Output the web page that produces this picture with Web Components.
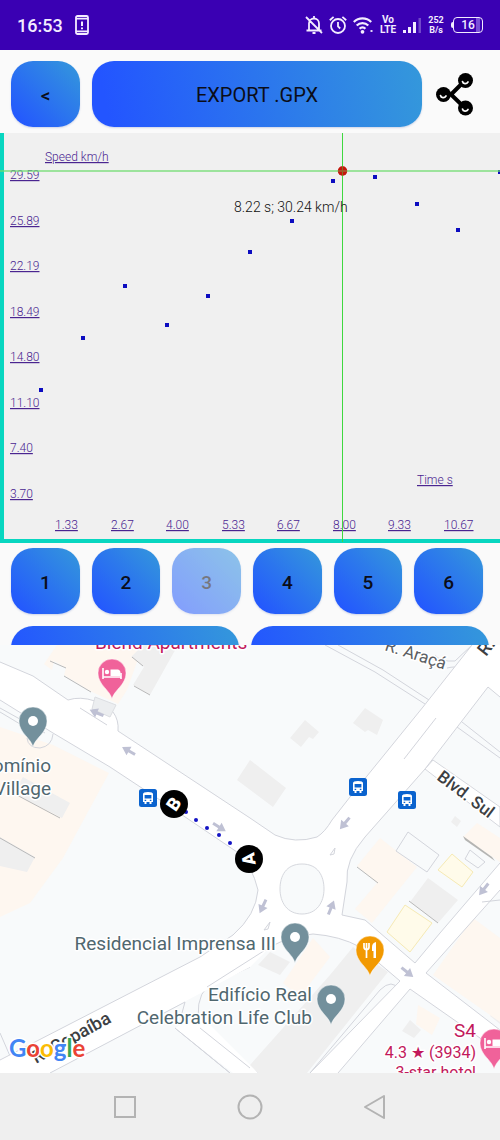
<!DOCTYPE html>
<html lang="en">
<head>
<meta charset="utf-8">
<meta name="viewport" content="width=device-width, initial-scale=1">
<title>Speed tracker</title>
<style>
  body {
    margin: 0;
    background: #fafafa;
    font-family: Roboto, "Liberation Sans", sans-serif;
  }
</style>
</head>
<body>
<tracker-app></tracker-app>

<script>
class StatusBar extends HTMLElement {
  constructor() {
    super();
    this.attachShadow({ mode: 'open' });
    this.shadowRoot.innerHTML = `
      <style>
        :host {
          display: flex;
          align-items: center;
          justify-content: space-between;
          height: 50px;
          padding: 0 17px;
          background: #3a00b3;
          color: #f3ecff;
        }
        .side {
          display: flex;
          align-items: center;
          gap: 6px;
        }
        .clock {
          font-size: 18px;
          font-weight: 500;
          margin-right: 6px;
        }
        svg {
          display: block;
          fill: none;
          stroke: currentColor;
          stroke-width: 1.8;
        }
        .stack {
          width: 18px;
          font-size: 9px;
          line-height: 10px;
          font-weight: 700;
          text-align: center;
          white-space: nowrap;
        }
        .stack.network {
          font-size: 10px;
        }
        .battery {
          box-sizing: border-box;
          width: 32px;
          display: flex;
          align-items: center;
        }
        .battery i {
          width: 2px;
          height: 6px;
          background: currentColor;
          border-radius: 2px 0 0 2px;
        }
        .battery span {
          flex: 1;
          border: 1px solid currentColor;
          border-radius: 4px;
          font-size: 12px;
          line-height: 14px;
          font-weight: 500;
          text-align: center;
          background: linear-gradient(90deg, transparent 78%, #7a4fd6 78%, #7a4fd6 92%, transparent 92%);
        }
      </style>
      <div class="side">
        <span class="clock">16:53</span>
        <svg width="14" height="20" viewBox="0 0 14 20">
          <rect x="1" y="1" width="12" height="18" rx="1.5" />
          <path d="M1 3.6h12M1 16.4h12" />
          <path d="M7 6.5v4.6M7 12.4v1.8" stroke-width="2" />
        </svg>
      </div>
      <div class="side">
        <svg width="18" height="20" viewBox="0 0 18 20">
          <path d="M4 15.500V8.500a5 5 0 0 1 10 0v7M1.500 15.500h15M9 1v2.500M7.500 18h3M1 2 17 18" />
        </svg>
        <svg width="18" height="20" viewBox="0 0 18 20">
          <circle cx="9" cy="11" r="7" />
          <path d="M9 7v4.300l2.200 2.200M.8 5.200 4.600 1.900M17.200 5.200 13.400 1.900" />
        </svg>
        <svg width="20" height="20" viewBox="0 0 20 20">
          <path d="M.8 7a12.300 12.300 0 0 1 17.400 0M3.700 10.500a8.200 8.200 0 0 1 11.600 0M6.600 13.700a4 4 0 0 1 5.800 0" stroke-width="2.200" />
          <circle cx="9.500" cy="16.800" r="1" fill="currentColor" />
          <path d="M17.500 16h2" />
        </svg>
        <div class="stack network">Vo<br>LTE</div>
        <svg width="18" height="20" viewBox="0 0 18 20">
          <g fill="currentColor" stroke="none">
            <rect y="15" width="3" height="3" /><rect x="5" y="12" width="3" height="6" />
            <rect x="10" y="7" width="3" height="11" /><rect x="15.500" y="3" width="2.500" height="15" opacity=".3" />
          </g>
        </svg>
        <div class="stack">252<br>B/s</div>
        <div class="battery"><i></i><span>16</span></div>
      </div>
    `;
  }
}

class GradientButton extends HTMLElement {
  constructor() {
    super();
    this.attachShadow({ mode: 'open' });
  }

  connectedCallback() {
    this.shadowRoot.innerHTML = `
      <style>
        :host {
          display: block;
        }
        button {
          display: block;
          width: 100%;
          height: 66px;
          padding: 2px 0 0;
          border: 0;
          border-radius: 22px;
          background: linear-gradient(var(--gradient-angle, 45deg), #2355ff 5%, #3498db);
          box-shadow: 0 1px 2px rgba(30, 60, 160, 0.2);
          color: #0b0d18;
          font: 500 19px Roboto, "Liberation Sans", sans-serif;
        }
        :host([wide]) button {
          font-weight: 400;
          font-size: 20px;
        }
        button:disabled {
          opacity: 0.55;
        }
      </style>
      <button type="button" ${this.hasAttribute('disabled') ? 'disabled' : ''}><slot></slot></button>
    `;
  }
}

class ToolRow extends HTMLElement {
  constructor() {
    super();
    this.attachShadow({ mode: 'open' });
    this.shadowRoot.innerHTML = `
      <style>
        :host {
          display: flex;
          align-items: center;
          gap: 12px;
          padding: 11px 24px 6px 11px;
        }
        .back {
          width: 69px;
        }
        .export {
          flex: 1;
          --gradient-angle: 80deg;
        }
        .share {
          padding: 0;
          border: 0;
          background: none;
        }
        svg {
          display: block;
        }
      </style>
      <gradient-button class="back">&lt;</gradient-button>
      <gradient-button class="export" wide>EXPORT .GPX</gradient-button>
      <button class="share" type="button" aria-label="Share">
        <svg width="42" height="44" viewBox="0 0 42 44">
          <path d="M31 8.500 17 22.500 31 36M9 22.500h9" fill="none" stroke="#000" stroke-width="4" />
          <circle cx="31.500" cy="8.500" r="7.500" /><circle cx="9.500" cy="22.500" r="7.500" /><circle cx="31.500" cy="36" r="7.500" />
          <g fill="none" stroke="#fafafa" stroke-width="1.700" stroke-linecap="round">
            <path d="M28.500 9.500c.5 2.500 4 3 5.500 .5M6.500 23.500c.5 2.500 4 3 5.500 .5M28.500 37c.5 2.500 4 3 5.500 .5" />
          </g>
        </svg>
      </button>
    `;
  }
}

class SpeedChart extends HTMLElement {
  constructor() {
    super();
    this.attachShadow({ mode: 'open' });
    this.render();
  }

  renderPoints() {
    const points = [
      [41, 257], [83, 205], [125, 153], [167, 192], [208, 163], [250, 119],
      [292, 88], [333, 48], [375, 44], [417, 71], [458, 97], [500, 39],
    ];
    return points
      .map(([x, y]) => `<rect x="${x - 2}" y="${y - 2}" width="4" height="4" />`)
      .join('');
  }

  renderLabels() {
    const speeds = ['29.59', '25.89', '22.19', '18.49', '14.80', '11.10', '7.40', '3.70'];
    const times = ['1.33', '2.67', '4.00', '5.33', '6.67', '8.00', '9.33', '10.67'];
    return [
      ...speeds.map((s, i) => `<text x="10" y="${Math.round(46 + i * 45.5)}">${s}</text>`),
      ...times.map((t, i) => `<text x="${Math.round(55 + i * 55.5)}" y="396">${t}</text>`),
    ].join('');
  }

  render() {
    this.shadowRoot.innerHTML = `
      <style>
        :host {
          display: block;
        }
        svg {
          display: block;
          width: 100%;
          height: auto;
          background: #f0f0f0;
        }
        .axis {
          fill: #08d6c0;
        }
        .labels {
          fill: #4a2590;
          font-size: 12px;
          font-weight: 300;
          text-decoration: underline;
        }
        .points {
          fill: #0c0cc0;
        }
        .reading {
          fill: #111;
          font-size: 14px;
          font-weight: 300;
        }
      </style>
      <svg viewBox="0 0 500 410" role="img" aria-label="Speed over time">
        <g class="labels">
          <text x="45" y="28">Speed km/h</text>
          <text x="417" y="351">Time s</text>
          ${this.renderLabels()}
        </g>
        <g class="points">${this.renderPoints()}</g>
        <rect class="axis" width="4" height="409" />
        <rect class="axis" y="406" width="500" height="4" />
        <circle cx="342.500" cy="38" r="4.700" fill="#c4180c" />
        <rect y="37" width="500" height="2" fill="#6fdc6f" opacity=".65" />
        <rect x="342" width="1" height="409" fill="#3fd83f" />
        <circle cx="342.500" cy="38" r="4.700" fill="#c4180c" opacity=".55" />
        <text class="reading" x="234" y="79">8.22 s; 30.24 km/h</text>
      </svg>
    `;
  }
}

class LapRow extends HTMLElement {
  constructor() {
    super();
    this.attachShadow({ mode: 'open' });
    this.shadowRoot.innerHTML = `
      <style>
        :host {
          display: block;
        }
        .laps {
          display: grid;
          grid-template-columns: repeat(6, 1fr);
          gap: 12px;
          padding: 5px 17px 12px 11px;
        }
        /* the next row only peeks out above the map */
        .more {
          display: flex;
          gap: 12px;
          height: 19px;
          padding: 0 11px;
          overflow: hidden;
          --gradient-angle: 70deg;
        }
        .more > * {
          flex: 24;
        }
        .more > :last-child {
          flex: 25;
        }
      </style>
      <div class="laps">
        ${[1, 2, 3, 4, 5, 6]
          .map((n) => `<gradient-button ${n === 3 ? 'disabled' : ''}>${n}</gradient-button>`)
          .join('')}
      </div>
      <div class="more">
        <gradient-button></gradient-button>
        <gradient-button></gradient-button>
      </div>
    `;
  }
}

class RouteMap extends HTMLElement {
  constructor() {
    super();
    this.attachShadow({ mode: 'open' });
    this.render();
  }

  renderPin(x, y, color, glyph) {
    return `
      <g transform="translate(${x} ${y})">
        <path d="M0 26C-2 17-14 12-14 0a14 14 0 0 1 28 0C14 12 2 17 0 26z" fill="${color}" stroke="#fff" stroke-opacity=".6" stroke-width=".8" />
        ${glyph}
      </g>
    `;
  }

  renderBus(x, y) {
    return `
      <g transform="translate(${x} ${y})">
        <rect x="-9" y="-9" width="18" height="18" rx="2.500" fill="#0b63ce" />
        <path d="M-5-4q0-2 5-2t5 2v8h-1.500v2h-2v-2h-3v2h-2v-2H-5z" fill="#fff" />
        <path d="M-3.400-3h6.800v3.400h-6.800zM-3.400 1.800h1.600v1.300h-1.600zM1.800 1.800h1.600v1.300H1.800z" fill="#0b63ce" />
      </g>
    `;
  }

  renderArrow(x, y, angle) {
    return `<path transform="translate(${x} ${y}) rotate(${angle})" d="M8 0 0-5v3.500h-7v3h7V5z" />`;
  }

  render() {
    const dot = '<circle r="5" fill="#fff" />';
    const bed = `
      <path d="M-9-5v11M9 0v6M-9 4H9" fill="none" stroke="#fff" stroke-width="1.600" />
      <circle cx="-5" cy="-1" r="2.200" fill="#fff" />
      <path d="M-1.500-3.500H6Q8.500-3 8.500 0v3h-10z" fill="#fff" />
    `;
    const cutlery = `
      <path d="M-6-7v4q0 2.500 2.500 2.500T-1-3v-4M-3.500-7V8" fill="none" stroke="#fff" stroke-width="1.700" />
      <path d="M2-3q0-4 4-5V8H3.500V1H2z" fill="#fff" />
    `;

    this.shadowRoot.innerHTML = `
      <style>
        :host {
          display: block;
        }
        svg {
          display: block;
          width: 100%;
          height: auto;
          background: #f8fafb;
        }
        text {
          paint-order: stroke;
          stroke: #fff;
          stroke-width: 3px;
          stroke-linejoin: round;
        }
        .road { fill: #fff; stroke: #d6d8de; }
        .line { fill: none; stroke: #d3d5dc; }
        .grey { fill: #efefef; }
        .cream { fill: #fef7f0; }
        .yellow { fill: #fffbea; stroke: #f6eab4; }
        .shade { fill: none; stroke: #b9b9b9; }
        .arrows { fill: #bfc1d4; }
        .place { fill: #50676f; font-size: 19px; text-anchor: end; }
        .hotel { fill: #c2185b; font-size: 19px; }
        .hotel.small { font-size: 16px; }
        .right { text-anchor: end; }
        .street { fill: #5b5e63; font-size: 17px; }
        .street.dark { fill: #3c4043; font-weight: 500; }
        .street.large { font-size: 18px; }
        .marker { fill: #fff; stroke: none; font-size: 18px; font-weight: 900; text-anchor: middle; }
        .logo { font-family: Lato, sans-serif; font-size: 24px; font-weight: 700; }
      </style>
      <svg viewBox="0 645 500 428" role="img" aria-label="Map of the route">
        <!-- plots and buildings -->
        <path class="cream" d="M0 727 53 745 109 773 63 858 30 903 0 917zM57 645 44 664 52 670 54 661 66 668 64 675 92 692 118 704 127 690 143 645z" />
        <path class="grey" d="M143 645 131 657 144 667 133 685 150 695 178 645zM23 777 70 803 62 818 13 793zM0 837 35 857 27 872 0 866z
          M237 780 250 760 286 788 273 807zM305 720 319 732 313 739 309 737 301 747 290 738zM365 708 383 720 377 735 368 730 365 732 353 723z
          M428 878 458 900 438 923 410 902zM353 947 388 972 307 1073 243 1073 330 975zM270 952 290 962 280 975 258 965z
          M410 1020 421 1030 414 1038 402 1031zM455 816 461 821 457 827 451 822zM500 1005 490 1016 500 1024z" />
        <path class="cream" d="M380 838 417 867 372 923 355 909 377 883 357 866zM473 918 500 938V1022L433 975zM477 823 500 838V862L463 837zM313 938 330 957 300 997 283 983z
          M418 1005 440 1018 432 1035 416 1024z" />
        <path class="yellow" d="M452 854 473 872 462 887 438 870zM405 905 432 923 410 952 387 932z" />
        <path class="line" fill="#f1f2f3" d="M408 832 439 855 427 872 396 851zM470 850 485 862 478 868 465 859z" />
        <path class="shade" d="M50 661 66 668M64 676 91 692M132 657 143 666M134 686 150 695M13 793 60 818M0 838 35 858M378 883 357 867M409 901 438 923" />
        <path d="M463 836 492 857 495 861 465 840z" fill="#b4b4b2" />

        <!-- side streets -->
        <path class="line" d="M325 645 375 672 425 704M338 645 383 670 429 700M462 722 500 752M457 727 500 758M0 708 45 733M0 712 30 730M0 1033 10 1056M230 1073 175 1028M258 1073 200 1030Q194 1000 207 987L250 967
          M182 1013 185 1002M447 668Q456 666 458 668M325 1073 400 990Q392 978 380 990L310 1073M500 690 488 687M472 645 455 661Q440 662 435 655" />
        <path class="road" d="M433 760 500 807V827L425 769z" />

        <!-- main roads; fills first, kerbs after, so that the crossings stay open -->
        <path fill="#fff" d="M0 662 33 676 68 700Q80 696 95 701L113 712Q119 720 118 731L250 818 275 835Q295 844 317 837 325 832 332 820L350 797 423 707 472 645H500V697L488 687 425 769 365 837Q345 860 347 882L342 915 365 920 415 963 440 933 500 863V890L426 973 500 1030V1055L480 1038 410 989 338 1073H310L400 981 360 947Q340 936 313 934 290 936 270 947L250 967 50 1073H0V1060L200 957 233 935Q256 915 258 890 252 865 237 852L160 800 110 767 53 733 0 700z" />
        <path fill="#fff" d="M175 1028 200 1015 258 1073H233z" />
        <path class="line" d="M0 662 33 676 68 700Q80 696 95 701L113 712Q119 720 118 731L250 818 275 835Q295 844 317 837 325 832 332 820L350 797 423 707 472 645
          M500 697 488 687 425 769 365 837Q345 860 347 882L342 915 365 920 415 963 440 933 500 863M500 890 426 973 500 1030M500 1055 480 1038 410 989 338 1073
          M310 1073 400 981 360 947Q340 936 313 934 290 936 270 947L207 987M185 1002 50 1073M0 1060 200 957 233 935Q256 915 258 890 252 865 237 852L160 800 110 767 53 733 0 700
          M80 708 107 725M436 718 404 759M500 900 482 902M175 1028 230 1073M200 1028 250 1068" />
        <path d="M95 697 116 705 110 717 92 709z" fill="#eceef0" stroke="#dcdee2" />
        <path class="line" d="M27 738Q28 748 40 748 52 746 53 734" />
        <path d="M302 864C318 864 324 876 324 889S317 914 302 914 280 902 280 889 286 864 302 864z" fill="#f8fafb" stroke="#d6d8de" />
        <path class="line" d="M330 855 335 848 334 854zM264 930 270 922 268 929z" />

        <g class="arrows">
          ${this.renderArrow(97, 713, 203)}
          ${this.renderArrow(129, 751, 210)}
          ${this.renderArrow(219, 827, 32)}
          ${this.renderArrow(345, 823, 130)}
          ${this.renderArrow(263, 906, 115)}
          ${this.renderArrow(331, 908, -68)}
          ${this.renderArrow(407, 972, 38)}
          ${this.renderArrow(484, 889, 128)}
        </g>

        <!-- labels -->
        <text class="hotel" x="95" y="649">Blend Apartments</text>
        <text class="place" x="51" y="772">Condomínio</text>
        <text class="place" x="51" y="795">Village</text>
        <text class="place" x="276" y="950">Residencial Imprensa III</text>
        <text class="place" x="312" y="1001">Edifício Real</text>
        <text class="place" x="312" y="1024">Celebration Life Club</text>
        <text class="street" transform="translate(384 650) rotate(18)">R. Araçá</text>
        <text class="street dark" transform="translate(436 779) rotate(37)">Blvd. Sul</text>
        <text class="street dark large" transform="translate(486 657) rotate(-52)">R.</text>
        <text class="street dark large" transform="translate(36 1064) rotate(-29)">R. Copaíba</text>
        <text class="hotel right" x="476" y="1037">S4</text>
        <text class="hotel small right" x="476" y="1058">4.3 ★ (3934)</text>
        <text class="hotel small right" x="476" y="1078">3-star hotel</text>

        ${this.renderPin(33, 721, '#73909c', dot)}
        ${this.renderPin(295, 937, '#73909c', dot)}
        ${this.renderPin(331, 999, '#73909c', dot)}
        ${this.renderPin(112, 673, '#f0629a', bed)}
        ${this.renderPin(494, 1043, '#f0629a', bed)}
        ${this.renderPin(370, 950, '#f29900', cutlery)}
        ${this.renderBus(148, 798)}
        ${this.renderBus(358, 787)}
        ${this.renderBus(407, 800)}

        <!-- recorded track -->
        <g fill="#1414c4">
          <circle cx="186" cy="812" r="2" /><circle cx="196" cy="820" r="2" /><circle cx="207" cy="828" r="2" />
          <circle cx="219" cy="835" r="2" /><circle cx="230" cy="843" r="2" />
        </g>
        <circle cx="174" cy="804" r="14" /><circle cx="249" cy="859" r="14" />
        <text class="marker" transform="translate(174 804) rotate(-56)" y="6">B</text>
        <text class="marker" transform="translate(249 859) rotate(-98)" y="6">A</text>

        <text class="logo" x="9" y="1057"><tspan fill="#4285f4">G</tspan><tspan fill="#ea4335">o</tspan><tspan fill="#fbbc05">o</tspan><tspan fill="#4285f4">g</tspan><tspan fill="#34a853">l</tspan><tspan fill="#ea4335">e</tspan></text>
      </svg>
    `;
  }
}

class SystemNav extends HTMLElement {
  constructor() {
    super();
    this.attachShadow({ mode: 'open' });
    this.shadowRoot.innerHTML = `
      <style>
        :host {
          display: grid;
          grid-template-columns: repeat(3, 25%);
          justify-content: center;
          justify-items: center;
          align-items: center;
          height: 67px;
          background: #efefef;
        }
        button {
          padding: 0;
          border: 0;
          background: none;
        }
        svg {
          display: block;
          fill: none;
          stroke: #b3b3b3;
          stroke-width: 2;
        }
      </style>
      <button type="button" aria-label="Recent apps">
        <svg width="26" height="26" viewBox="0 0 26 26"><rect x="3" y="3" width="20" height="20" /></svg>
      </button>
      <button type="button" aria-label="Home">
        <svg width="26" height="26" viewBox="0 0 26 26"><circle cx="13" cy="13" r="11.500" /></svg>
      </button>
      <button type="button" aria-label="Back">
        <svg width="26" height="26" viewBox="0 0 26 26"><path d="M22 2 3 13 22 24z" stroke-linejoin="round" /></svg>
      </button>
    `;
  }
}

class TrackerApp extends HTMLElement {
  constructor() {
    super();
    this.attachShadow({ mode: 'open' });
    this.shadowRoot.innerHTML = `
      <style>
        :host {
          display: flex;
          flex-direction: column;
        }
      </style>
      <status-bar></status-bar>
      <tool-row></tool-row>
      <speed-chart></speed-chart>
      <lap-row></lap-row>
      <route-map></route-map>
      <system-nav></system-nav>
    `;
  }
}

customElements.define('status-bar', StatusBar);
customElements.define('gradient-button', GradientButton);
customElements.define('tool-row', ToolRow);
customElements.define('speed-chart', SpeedChart);
customElements.define('lap-row', LapRow);
customElements.define('route-map', RouteMap);
customElements.define('system-nav', SystemNav);
customElements.define('tracker-app', TrackerApp);
</script>
</body>
</html>
